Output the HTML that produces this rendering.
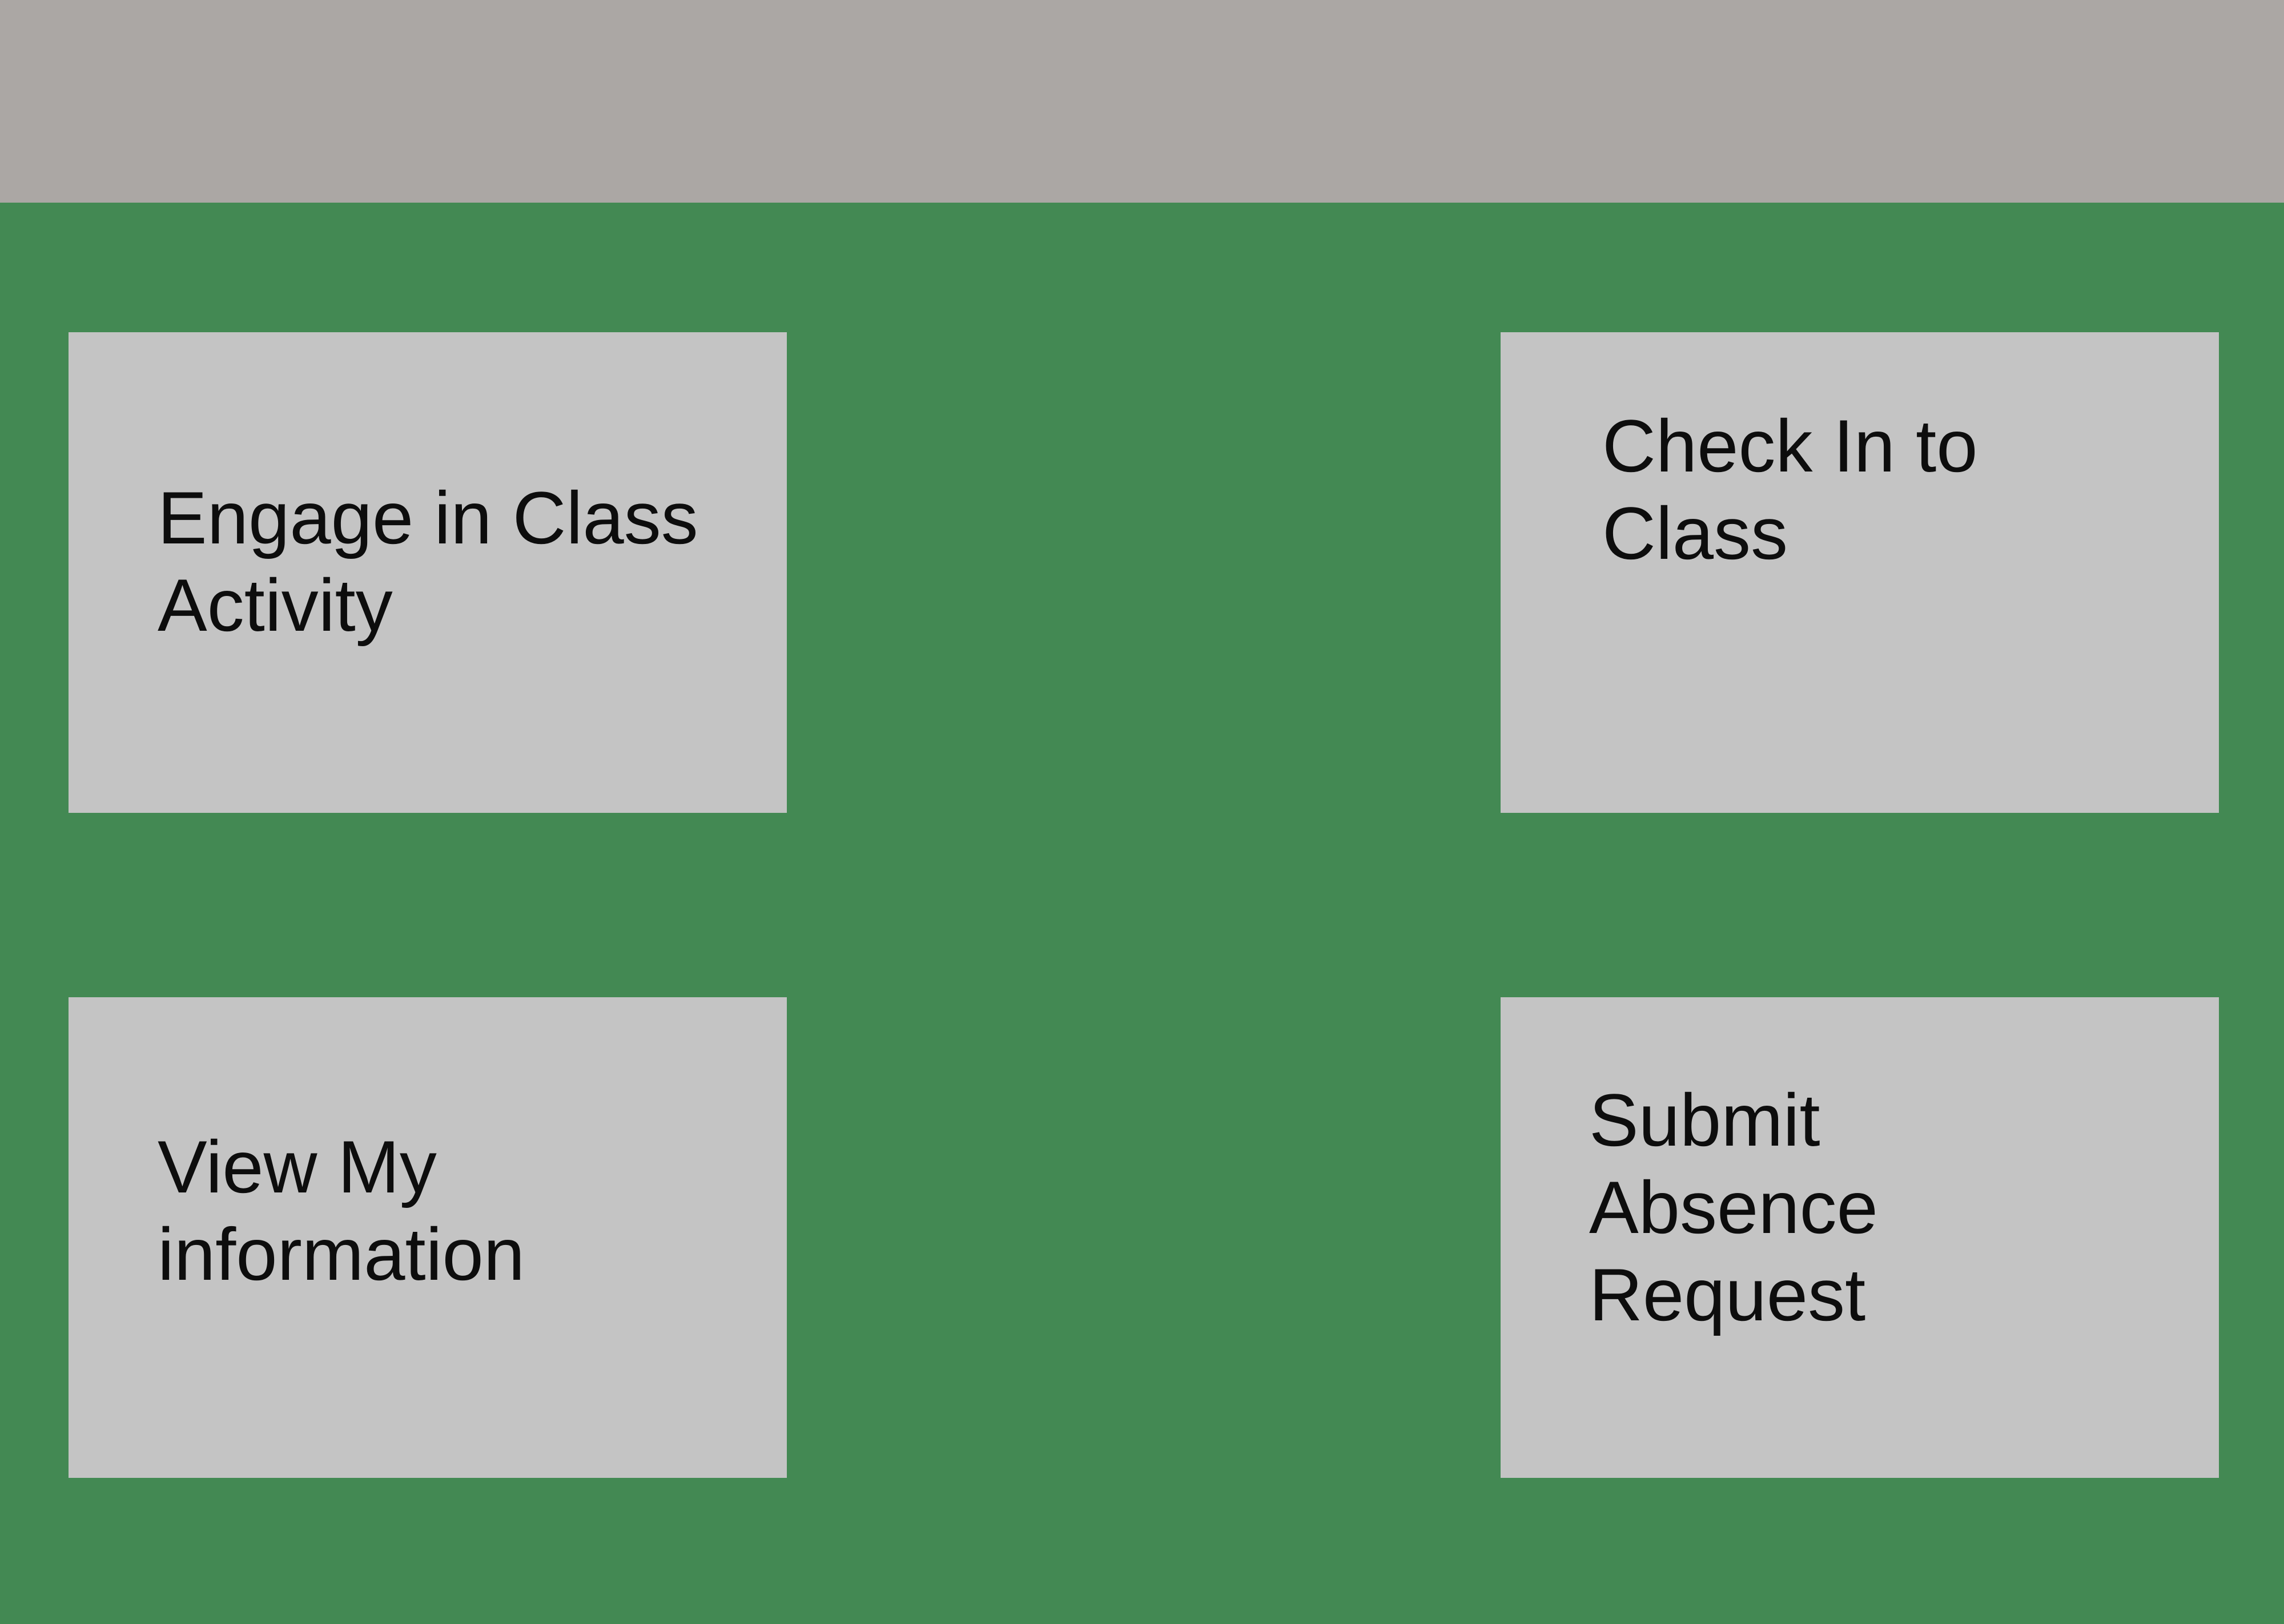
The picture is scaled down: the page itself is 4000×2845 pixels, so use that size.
<!DOCTYPE html>
<html>
<head>
<meta charset="utf-8">
<style>
  html, body { margin:0; padding:0; }
  body { width:4000px; height:2845px; background:#438953; position:relative; overflow:hidden;
         font-family:"Liberation Sans", sans-serif; color:#0d0d0d; }
  .hdr { position:absolute; left:0; top:0; width:4000px; height:355px; background:#aba7a4; }
  .box { position:absolute; background:#c4c4c4; width:1258px; height:842px; }
  .t { position:absolute; font-size:130px; line-height:153px; white-space:nowrap; }
</style>
</head>
<body>
<div class="hdr"></div>
<div class="box" style="left:120px;top:582px;"></div>
<div class="box" style="left:2628px;top:582px;"></div>
<div class="box" style="left:120px;top:1747px;"></div>
<div class="box" style="left:2628px;top:1747px;"></div>
<div class="t" style="left:276px;top:831px;">Engage in Class<br>Activity</div>
<div class="t" style="left:2806px;top:705px;">Check In to<br>Class</div>
<div class="t" style="left:276px;top:1968px;">View My<br>information</div>
<div class="t" style="left:2783px;top:1886px;">Submit<br>Absence<br>Request</div>
</body>
</html>
